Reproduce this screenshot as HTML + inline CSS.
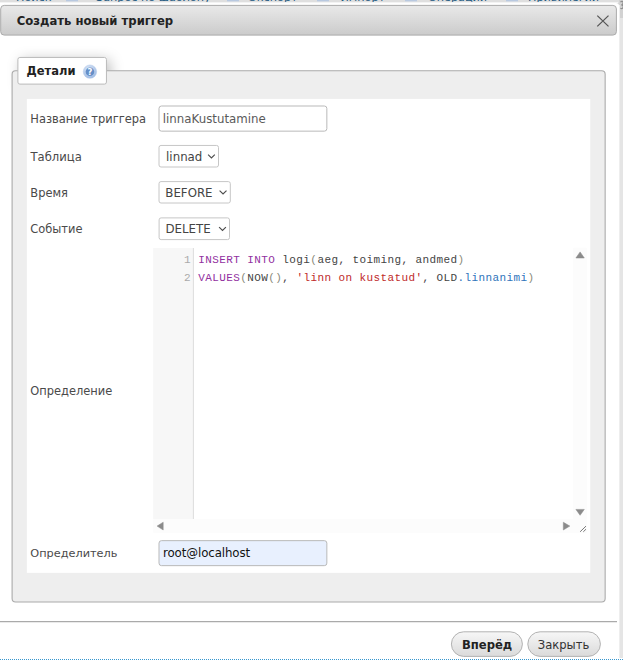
<!DOCTYPE html>
<html lang="ru">
<head>
<meta charset="utf-8">
<title>Создать новый триггер</title>
<style>
html,body{margin:0;padding:0;}
body{width:623px;height:664px;overflow:hidden;background:#e5e5e5;position:relative;font-family:"DejaVu Sans","Liberation Sans",sans-serif;font-size:11.45px;color:#444;}
.abs{position:absolute;}
#topbar{left:0;top:0;width:623px;height:18px;background:#d2d2d2;}
#bgtabs{left:0;top:0;width:619px;height:3px;overflow:hidden;background:#dfdfdf;}
#bgtabs span{position:absolute;top:-9px;font-size:11.2px;line-height:14px;color:#235a81;white-space:nowrap;}
#bgtabs i{position:absolute;top:0;height:2px;width:12px;background:linear-gradient(#b9c9e0,#b9c9e0 1px,#d3dae4 1px);}
#corner3{left:619.6px;top:-3px;font-size:11px;line-height:14px;color:#999;}
#bottomwhite{left:0;top:658px;width:623px;height:6px;background:#fff;}
#dotline{left:0;top:659px;width:623px;height:1px;background:repeating-linear-gradient(90deg,#3e9bcf 0,#3e9bcf 1px,#fff 1px,#fff 2px);}
#dialog{left:-6px;top:3px;width:625px;height:656px;background:#fff;border-radius:3px 3px 0 0;}
#dlgedge{left:619px;top:5px;width:1px;height:653px;background:#eeeeee;}
#dlgtop{left:0;top:2px;width:618px;height:1px;background:#f3f3f3;}
#legshadow{left:17.5px;top:57px;width:89px;height:27.5px;border-radius:2px;background:#fff;box-shadow:3px 3px 14px rgba(0,0,0,.27);}
#frames{left:0;top:0;}
.t{position:absolute;line-height:18px;white-space:nowrap;}
.lbl{left:30.3px;font-size:11.45px;color:#4a4a4a;}
.fld{font-size:11.8px;color:#444;}
.b{font-weight:bold;color:#222;}
.ln{position:absolute;left:153.4px;width:37.1px;text-align:right;font-family:"Liberation Mono",monospace;font-size:11px;color:#aaa;line-height:17.5px;}
.cl{position:absolute;left:198.3px;font-family:"Liberation Mono",monospace;font-size:11px;letter-spacing:0.4px;color:#444;line-height:17.5px;white-space:pre;}
.k{color:#92309f}.s{color:#c02a2a}.v{color:#2f74bb}.p{color:#8a8a7a}
</style>
</head>
<body>
<div id="topbar" class="abs"></div>
<div id="bgtabs" class="abs"><span style="left:16px">Поиск</span><i style="left:66px"></i><span style="left:96px">Запрос по шаблону</span><i style="left:227px"></i><span style="left:249px">Экспорт</span><i style="left:317px"></i><span style="left:340.5px">Импорт</span><i style="left:405px"></i><span style="left:428px">Операции</span><i style="left:506px"></i><span style="left:528px">Привилегии</span></div>
<div id="bottomwhite" class="abs"></div>
<div id="dialog" class="abs"></div>
<div id="dlgedge" class="abs"></div>
<div id="dlgtop" class="abs"></div>
<div id="legshadow" class="abs"></div>
<svg id="frames" class="abs" width="623" height="664" viewBox="0 0 623 664">
  <defs>
    <linearGradient id="gt" x1="0" y1="0" x2="0" y2="1"><stop offset="0" stop-color="#e9e9e9"/><stop offset="1" stop-color="#cbcbcb"/></linearGradient>
    <linearGradient id="gb" x1="0" y1="0" x2="0" y2="1"><stop offset="0" stop-color="#f7f7f7"/><stop offset="1" stop-color="#dadada"/></linearGradient>
    <radialGradient id="hg" cx="40%" cy="30%" r="75%"><stop offset="0" stop-color="#dbe6f6"/><stop offset="1" stop-color="#9bb9e3"/></radialGradient>
    <clipPath id="fsclip"><rect x="0" y="0" width="623" height="664"/></clipPath>
  </defs>
  <path d="M620.4 1.9 Q622.6 0.4 623.2 2.6 Q623.2 4.7 621.3 5 Q623.6 5.4 623.2 7.3 Q622.4 9.2 620.4 8.2" stroke="#8f8f8f" stroke-width="1.2" fill="none"/>
  <!-- title bar -->
  <rect x="0.7" y="5.4" width="615.7" height="29.7" rx="3.5" fill="url(#gt)" stroke="#aaa" stroke-width="1"/>
  <path d="M597.3 15.6 L608.5 26.4 M608.5 15.6 L597.3 26.4" stroke="#555" stroke-width="1.25" fill="none"/>
  <!-- fieldset -->
  <rect x="12.1" y="70.7" width="593.05" height="531.25" rx="3.5" fill="#eee" stroke="#aaa" stroke-width="1.1"/>
  <!-- table -->
  <rect x="26.85" y="98.9" width="563.4" height="473.95" fill="#fff"/>
  <!-- inputs -->
  <rect x="159" y="106" width="167.85" height="25.15" rx="2.5" fill="#fff" stroke="#b9b9b9" stroke-width="1"/>
  <rect x="159" y="540.65" width="167.85" height="25" rx="2.5" fill="#e8f0fe" stroke="#b9b9b9" stroke-width="1"/>
  <!-- selects -->
  <rect x="159" y="145.45" width="59.5" height="21.55" rx="2" fill="#fff" stroke="#c6c6c6" stroke-width="1"/>
  <rect x="159" y="181.6" width="71.3" height="21.4" rx="2" fill="#fff" stroke="#c6c6c6" stroke-width="1"/>
  <rect x="159.1" y="217.9" width="70.4" height="21.7" rx="2" fill="#fff" stroke="#c6c6c6" stroke-width="1"/>
  <path d="M208.1 154.6 L211.45 157.9 L214.8 154.6" stroke="#4c4c4c" stroke-width="1.15" fill="none"/>
  <path d="M219.6 190.6 L223.05 194 L226.5 190.6" stroke="#4c4c4c" stroke-width="1.15" fill="none"/>
  <path d="M219.1 227.2 L222.5 230.5 L225.9 227.2" stroke="#4c4c4c" stroke-width="1.15" fill="none"/>
  <!-- editor -->
  <rect x="153.2" y="248" width="40.2" height="271.1" fill="#f7f7f7"/>
  <rect x="192.9" y="248" width="1" height="271.1" fill="#ddd"/>
  <rect x="573.2" y="247.7" width="13.6" height="271.4" fill="#fcfcfc"/>
  <rect x="153.2" y="519.1" width="433.6" height="13.8" fill="#fcfcfc"/>
  <path d="M575.9 258 L584.3 258 L580.1 251.9 Z" fill="#8b8b8b" stroke="#8b8b8b" stroke-width=".5" stroke-linejoin="round"/>
  <path d="M575.9 509.4 L584.3 509.4 L580.1 515.3 Z" fill="#8b8b8b" stroke="#8b8b8b" stroke-width=".5" stroke-linejoin="round"/>
  <path d="M163.2 522.2 L163.2 530 L157.1 526.1 Z" fill="#8b8b8b" stroke="#8b8b8b" stroke-width=".5" stroke-linejoin="round"/>
  <path d="M563.3 522.2 L563.3 530 L569.8 526.1 Z" fill="#8b8b8b" stroke="#8b8b8b" stroke-width=".5" stroke-linejoin="round"/>
  <path d="M580.1 531.8 L586 526.1 M583.3 531.8 L586 529.2" stroke="#6a6a6a" stroke-width=".9" fill="none"/>
  <!-- legend -->
  <rect x="17.9" y="57.45" width="88.55" height="26.65" rx="2" fill="#fff" stroke="#bababa" stroke-width="1"/>
  <circle cx="89.95" cy="71.65" r="6.7" fill="url(#hg)" stroke="#b4cbea" stroke-width=".5"/>
  <circle cx="89.95" cy="71.8" r="4.3" fill="#658fc8"/>
  <text x="89.95" y="74.9" text-anchor="middle" font-family="DejaVu Sans, Liberation Sans, sans-serif" font-size="8.4" font-weight="bold" fill="#fff">?</text>
  <line x1="0" y1="659.5" x2="623" y2="659.5" stroke="#3797cf" stroke-width="1" stroke-dasharray="1 1" shape-rendering="crispEdges"/>
  <!-- button pane -->
  <rect x="0" y="621" width="617" height="1.25" fill="#aaa"/>
  <rect x="451.4" y="631.8" width="71" height="24.6" rx="12.3" fill="url(#gb)" stroke="#b2b2b2" stroke-width="1"/>
  <rect x="527.8" y="631.8" width="72.6" height="24.6" rx="12.3" fill="url(#gb)" stroke="#b2b2b2" stroke-width="1"/>
</svg>

<div class="t b" style="left:16.7px;top:11.5px;font-size:11.65px;">Создать новый триггер</div>
<div class="t b" style="left:26.5px;top:62.2px;font-size:11.5px;">Детали</div>

<div class="t lbl" style="top:110px">Название триггера</div>
<div class="t fld" style="left:162.8px;top:110.2px;color:#5a5a5a">linnaKustutamine</div>
<div class="t lbl" style="top:147.6px;font-size:11.6px;left:30.5px">Таблица</div>
<div class="t fld" style="left:166.1px;top:148px">linnad</div>
<div class="t lbl" style="top:184px">Время</div>
<div class="t fld" style="left:165.3px;top:184px">BEFORE</div>
<div class="t lbl" style="top:220px">Событие</div>
<div class="t fld" style="left:165.5px;top:220.2px">DELETE</div>
<div class="t lbl" style="top:382px">Определение</div>
<div class="ln" style="top:252.4px">1</div>
<div class="ln" style="top:269.9px">2</div>
<div class="cl" style="top:252.4px"><span class="k">INSERT</span> <span class="k">INTO</span> logi<span class="p">(</span>aeg, toiming, andmed<span class="p">)</span></div>
<div class="cl" style="top:269.9px"><span class="k">VALUES</span><span class="p">(</span>NOW<span class="p">()</span>, <span class="s">'linn on kustatud'</span>, OLD<span class="v">.linnanimi</span><span class="p">)</span></div>
<div class="t lbl" style="top:545.2px;font-size:11.3px">Определитель</div>
<div class="t fld" style="left:163px;top:544.2px;color:#111;letter-spacing:-0.1px">root@localhost</div>

<div class="t b" style="left:462px;top:635.8px;font-size:11.6px;">Вперёд</div>
<div class="t" style="left:537.8px;top:635.8px;font-size:11.55px;color:#333;">Закрыть</div>
</body>
</html>
